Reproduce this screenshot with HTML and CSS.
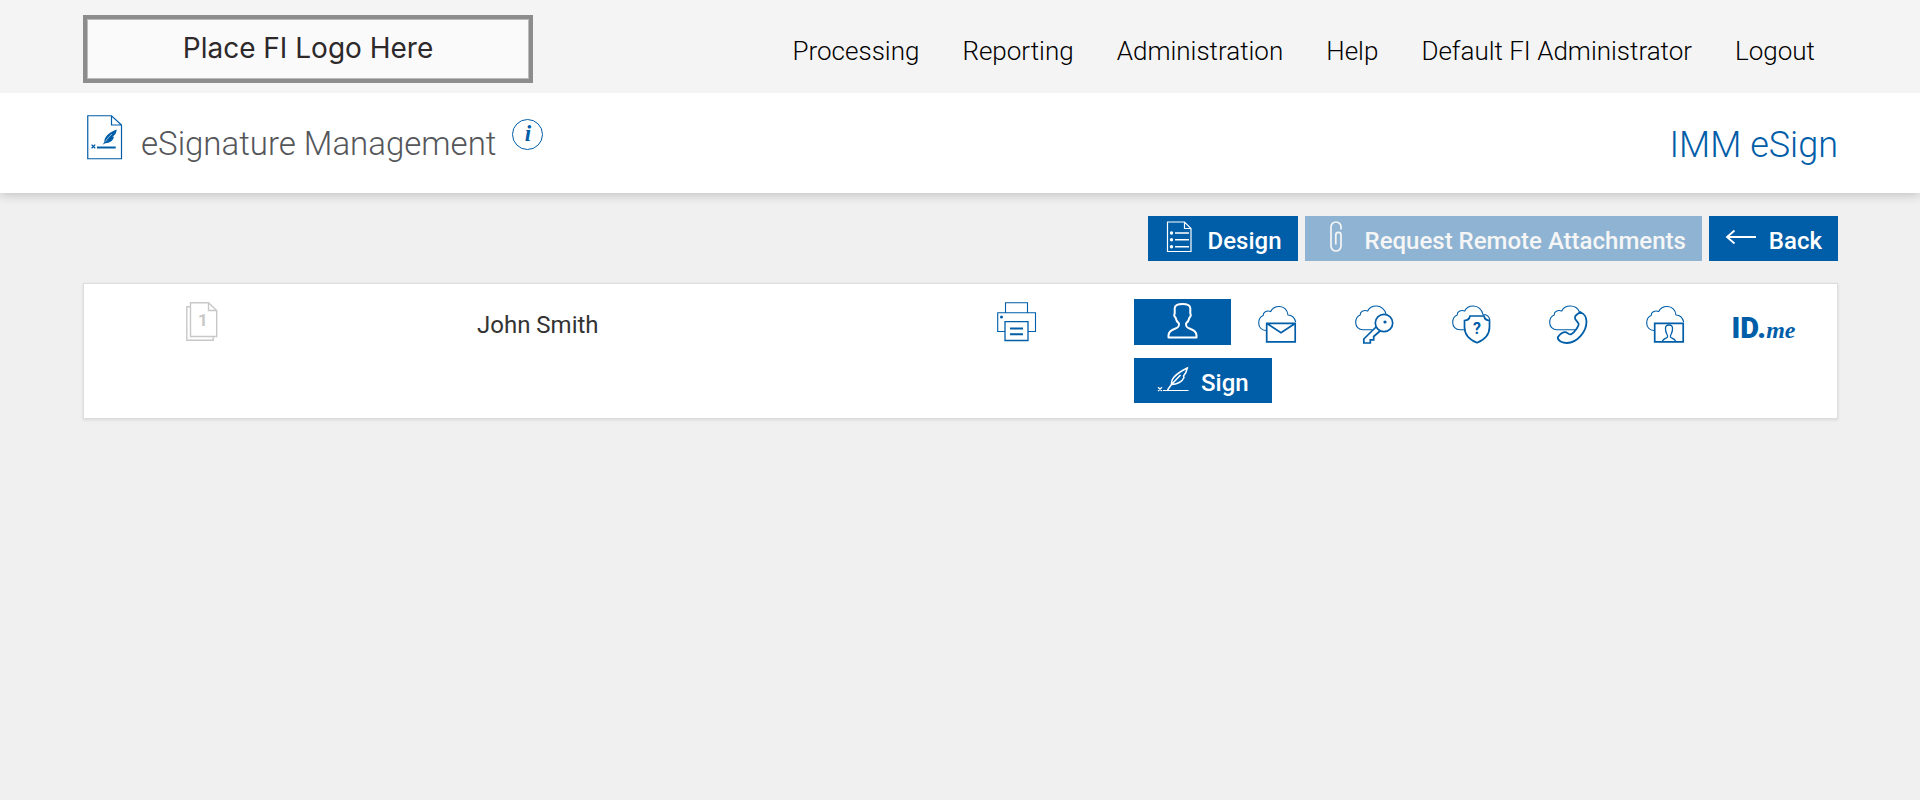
FILE: index.html
```html
<!DOCTYPE html>
<html lang="en">
<head>
<meta charset="utf-8">
<title>eSignature Management</title>
<link rel="stylesheet" href="styles.css">
</head>
<body>
<header class="site-header">
  <a class="fi-logo" href="#">Place FI Logo Here</a>
  <nav class="main-nav">
    <a href="#">Processing</a>
    <a href="#">Reporting</a>
    <a href="#">Administration</a>
    <a href="#">Help</a>
    <a href="#">Default FI Administrator</a>
    <a href="#">Logout</a>
  </nav>
</header>

<div class="title-bar">
  <svg class="title-icon" width="36" height="45" viewBox="0 0 36 45" fill="none" stroke="currentColor" aria-hidden="true">
    <path d="M.75.75H24.5L34.5 10V43.75H.75ZM24.5.75V10H34.5" stroke-width="1.2"/>
    <path d="M10 32.5H28.7" stroke-width="2"/>
    <path d="M4.6 29.6l3.6 3.6M8.2 29.6l-3.6 3.6" stroke-width="1.3"/>
    <path d="M29.7 14.4C23 17 17 21 17.3 27.2L15.5 29.7 18.3 28.3C24 28 26.5 24.5 27 21.5L25.3 22 28 19.5C29 18 29.5 16.5 29.7 14.4Z" fill="currentColor" stroke="none"/>
    <path d="M18.5 26.5C20 24 22 21.5 25 19" stroke="#fff" stroke-width=".6"/>
  </svg>
  <h1 class="page-title">eSignature Management</h1>
  <button class="info" type="button" aria-label="Information">i</button>
  <span class="product">IMM eSign</span>
</div>

<main class="content">
  <div class="toolbar">
    <button class="btn" type="button">
      <svg width="32" height="32" viewBox="0 0 32 32" fill="none" stroke="currentColor" stroke-width="1.2" aria-hidden="true">
        <path d="M3.5 1H20.5L27 7.5V30.5H3.5ZM20.5 1V7.5H27"/>
        <path d="M11 12H25M11 18.7H25M11 25.7H25" stroke-width="1.4"/>
        <g fill="currentColor" stroke="none"><circle cx="7.5" cy="12" r="1.7"/><circle cx="7.5" cy="18.7" r="1.7"/><circle cx="7.5" cy="25.7" r="1.7"/></g>
      </svg>
      <span>Design</span>
    </button>
    <button class="btn" type="button" disabled>
      <svg width="32" height="32" viewBox="0 0 32 32" fill="none" stroke="currentColor" stroke-width="1.7" aria-hidden="true">
        <path d="M20 8.500V6A5 5 0 0 0 10 6V25A5 5 0 0 0 20 25V14A2.600 2.600 0 0 0 14.800 14V23.500"/>
      </svg>
      <span>Request Remote Attachments</span>
    </button>
    <button class="btn" type="button">
      <svg width="32" height="32" viewBox="0 0 32 32" fill="none" stroke="currentColor" stroke-width="1.8" aria-hidden="true">
        <path d="M31 16H1.500M9.500 9.500L2 16L9.500 22.500"/>
      </svg>
      <span>Back</span>
    </button>
  </div>

  <section class="signer">
    <div class="cell center">
      <svg class="muted" width="32" height="40" viewBox="0 0 32 40" fill="none" stroke="currentColor" stroke-width="1.4" aria-label="1 document" role="img">
        <path d="M4 4.700H.8V38.300H27.200V34.500M4.500 .8H22.500L30.700 8.500V34.500H4.500ZM22.500 .8V8.500H30.700"/>
        <text class="doc-count" x="17" y="24">1</text>
      </svg>
    </div>
    <div class="cell name">John Smith</div>
    <div class="cell center">
      <button class="plain" type="button" aria-label="Print">
        <svg width="40" height="40" viewBox="0 0 40 40" fill="none" stroke="currentColor" stroke-width="1.1" aria-hidden="true">
          <path d="M8.500 10.700V.7H30.500V10.700M8 29.500H.7V10.700H38.500V29.500H31"/>
          <path d="M8 19.600H31V38.500H8Z" stroke-width="1.3"/>
          <path d="M13 26.500H26M13 32.300H26" stroke-width="2"/>
          <circle cx="4.5" cy="15" r="1.5" fill="currentColor" stroke="none"/>
        </svg>
      </button>
    </div>
    <div class="actions">
      <div class="methods">
        <button class="method selected" type="button" aria-label="In person">
          <svg width="31" height="36" viewBox="0 0 31 36" fill="none" stroke="currentColor" stroke-width="2" stroke-linejoin="round" aria-hidden="true">
            <path d="M1.500 34.500H29.500V32.500C29.500 28.500 27 27 22.500 25.500C19.500 24.500 19 23.500 19 20.500C21 19 22 17 22.500 14.500C24 13.500 24 11.500 23.300 10.500V5C23 2.500 20.500 1 15.500 1S8 2.500 7.700 5V10.500C7 11.500 7 13.500 8.500 14.500C9 17 10 19 12 20.500C12 23.500 11.500 24.500 8.500 25.500C4 27 1.500 28.500 1.500 32.500Z"/>
          </svg>
        </button>
        <button class="method" type="button" aria-label="Remote by email">
          <svg width="40" height="40" viewBox="0 0 40 40" fill="none" stroke="currentColor" aria-hidden="true">
            <path d="M8 25.500C3.500 25.500 .7 22 .7 18C.7 14.500 2.500 11.500 5.200 10.500C5 7.500 8.500 5 12.700 6.500C14 3.500 17 1.500 21.500 1.500C26 1.500 29.500 5 30 10C34 10 36.500 12.500 37.700 17" stroke-width="1.1"/>
            <path d="M8.700 18.300H37.200V36.800H8.700ZM9 18.500L23 27.700L37 18.500" stroke-width="1.7"/>
          </svg>
        </button>
        <button class="method" type="button" aria-label="Remote by access key">
          <svg width="40" height="40" viewBox="0 0 40 40" fill="none" stroke="currentColor" aria-hidden="true">
            <path d="M17.500 24.800H8C3.500 24.800 .7 21.500 .7 17.500C.7 14 2.500 11 5.200 10C5 7 8.500 4.500 12.700 6C14 3 17 1 21.500 1C26 1 30 4.500 31 9" stroke-width="1.1"/>
            <circle cx="29" cy="18" r="8.7" stroke-width="1.7"/>
            <circle cx="30" cy="17" r="1.6" fill="currentColor" stroke="none"/>
            <path d="M21 22L8.800 34V38H15.300V34.800H18.700V31.500L25 26" stroke-width="1.7"/>
          </svg>
        </button>
        <button class="method" type="button" aria-label="Remote by security questions">
          <svg width="40" height="40" viewBox="0 0 40 40" fill="none" stroke="currentColor" aria-hidden="true">
            <path d="M13 24.800H8C3.500 24.800 .7 21.500 .7 17.500C.7 14 2.500 11 5.200 10C5 7 8.500 4.500 12.700 6C14 3 17 1 21.500 1C26 1 30 4.500 31 9.500C34.500 9.500 37.200 11.500 37.800 15" stroke-width="1.1"/>
            <path d="M18 11H32C32.500 13.500 34.500 15.500 37.500 15.500V22C37.500 29.500 32 35 25 37.800C18 35 12.500 29.500 12.500 22V15.500C15.500 15.500 17.500 13.500 18 11Z" stroke-width="1.7"/>
            <text class="shield-mark" x="25" y="29">?</text>
          </svg>
        </button>
        <button class="method" type="button" aria-label="Remote by phone">
          <svg width="40" height="40" viewBox="0 0 40 40" fill="none" stroke="currentColor" aria-hidden="true">
            <path d="M27 24.800H8C3.500 24.800 .7 21.500 .7 17.500C.7 14 2.500 11 5.200 10C5 7 8.500 4.500 12.700 6C14 3 17 1 21.500 1C25.500 1 29 3.500 30.500 7" stroke-width="1.1"/>
            <path d="M31.300 7C27 10 25 11.500 26.200 14L29.500 18.500C30.500 20 25.500 28 22 29.300C19.500 30 18.500 26.800 15.500 27.200C13 27.500 10.500 30 8.800 32.300C8.500 36 13.500 38 18 38C28 38 37.500 27 37.500 16.500C37.500 12.500 35 8.500 31.300 7Z" stroke-width="1.8" stroke-linejoin="round"/>
          </svg>
        </button>
        <button class="method" type="button" aria-label="Remote by photo ID">
          <svg width="40" height="40" viewBox="0 0 40 40" fill="none" stroke="currentColor" aria-hidden="true">
            <path d="M8 25.500C3.500 25.500 .7 22 .7 18C.7 14.500 2.500 11.500 5.200 10.500C5 7.500 8.500 5 12.700 6.500C14 3.500 17 1.500 21.500 1.500C26 1.500 29.500 5 30 10C34 10 36.500 12.500 37.700 17" stroke-width="1.1"/>
            <path d="M8.700 18.300H37.200V36.800H8.700Z" stroke-width="1.7"/>
            <path d="M16.500 36.500C16.500 33.500 21 33.500 21.500 32C21.800 30.500 21.500 30 20.800 29C20 27.500 19.500 26 19.500 24C19.300 20.500 21 20 23 20S26.700 20.500 26.500 24C26.500 26 26 27.500 25.200 29C24.500 30 24.200 30.500 24.500 32C25 33.500 29.500 33.500 29.500 36.500" stroke-width="1.3"/>
          </svg>
        </button>
        <button class="method" type="button"><span class="idme">ID.<i>me</i></span></button>
      </div>
      <button class="btn sign" type="button">
        <svg width="32" height="32" viewBox="0 0 32 32" fill="none" stroke="currentColor" aria-hidden="true">
          <path d="M6 27.500H31.500M1 24.300l4 3.700M5 24.300L1 28" stroke-width="1.2"/>
          <path d="M10.500 27L14.500 21.500C13.500 14 22 9 30.300 5C29.500 9 28.500 11 26.500 13L27 14.500C25.500 18.500 20 21.500 14.500 21.500L23.500 12" stroke-width="1.5"/>
        </svg>
        <span>Sign</span>
      </button>
    </div>
  </section>
</main>
</body>
</html>
```
FILE: styles.css
```css
* { box-sizing: border-box; }

body {
  margin: 0;
  background: #f0f0f0;
  color: #333;
  font-family: Roboto, "Liberation Sans", sans-serif;
  font-size: 24px;
}

button {
  margin: 0;
  padding: 0;
  border: 0;
  background: none;
  color: #005da8;
  font: inherit;
  cursor: pointer;
}

svg { display: block; flex: none; }

.site-header {
  position: relative;
  z-index: 1;
  display: flex;
  justify-content: space-between;
  padding: 15px 105px 10px 83px;
  background: #f4f4f4;
}

.fi-logo {
  width: 450px;
  height: 68px;
  padding-bottom: 2px;
  display: flex;
  align-items: center;
  justify-content: center;
  border: 4px solid #8c8c8c;
  box-shadow: inset 0 0 0 1px #bbb;
  background: #fafafa;
  color: #2d282a;
  font: 400 28px Inter, sans-serif;
  text-decoration: none;
}

.main-nav {
  display: flex;
  gap: 43px;
  padding-top: 21px;
}

.main-nav a {
  color: #000;
  font-size: 26px;
  font-weight: 300;
  line-height: 30px;
  text-decoration: none;
}

.title-bar {
  display: flex;
  align-items: center;
  height: 100px;
  padding: 0 82px 0 87px;
  background: #fff;
  box-shadow: 0 2px 10px rgba(0, 0, 0, .2);
}

.title-icon {
  margin-bottom: 12px;
  color: #005da8;
}

.page-title {
  margin: 2px 16px 0 18px;
  color: #54565a;
  font-size: 33px;
  font-weight: 300;
  line-height: 40px;
}

.info {
  width: 31px;
  height: 31px;
  margin-bottom: 18px;
  border: 1px solid #005da8;
  border-radius: 50%;
  font: italic bold 23px/28px "Liberation Serif", serif;
}

.product {
  margin-left: auto;
  padding-top: 4px;
  color: #005da8;
  font-size: 36px;
  font-weight: 300;
  line-height: 44px;
}

.content { padding: 23px 82px 40px 83px; }

.toolbar {
  display: flex;
  justify-content: flex-end;
  gap: 7px;
  margin-bottom: 22px;
}

.btn {
  display: flex;
  align-items: flex-start;
  gap: 12px;
  height: 45px;
  padding: 5px 16px 0;
  background: #005da8;
  color: #fff;
  font-weight: 500;
  line-height: 28px;
}

.btn span { padding-top: 6px; }

.btn:disabled {
  opacity: .4;
  cursor: default;
}

.signer {
  display: grid;
  grid-template-columns: 235fr 581fr 234fr 703fr;
  padding: 15px 0;
  border: 1px solid #ddd;
  background: #fff;
  box-shadow: 0 1px 3px rgba(0, 0, 0, .1);
}

.cell {
  display: flex;
  align-items: center;
  height: 46px;
}

.center { justify-content: center; }

.name {
  padding: 5px 0 0 158px;
  line-height: 28px;
}

.muted { color: #c8c8c8; }

.doc-count {
  fill: currentColor;
  stroke: none;
  font-size: 17px;
  font-weight: 700;
  text-anchor: middle;
}

.actions {
  display: flex;
  flex-direction: column;
  align-items: flex-start;
  gap: 13px;
  padding-right: 24px;
}

.methods {
  display: grid;
  grid-template-columns: repeat(7, 1fr);
  width: 100%;
}

.method {
  display: flex;
  justify-content: center;
  height: 46px;
  padding: 6px 4px 0 0;
}

.selected {
  padding: 4px 0 0;
  background: #005da8;
  color: #fff;
}

.shield-mark {
  fill: currentColor;
  stroke: none;
  font-size: 16px;
  font-weight: 700;
  text-anchor: middle;
}

.idme {
  padding: 6px 0 0 2px;
  font-size: 29px;
  font-weight: 900;
  line-height: 34px;
}

.idme i {
  font-family: "Liberation Serif", serif;
  font-size: 24px;
  font-weight: 700;
}

.sign { padding: 5px 23px 0; }
```
